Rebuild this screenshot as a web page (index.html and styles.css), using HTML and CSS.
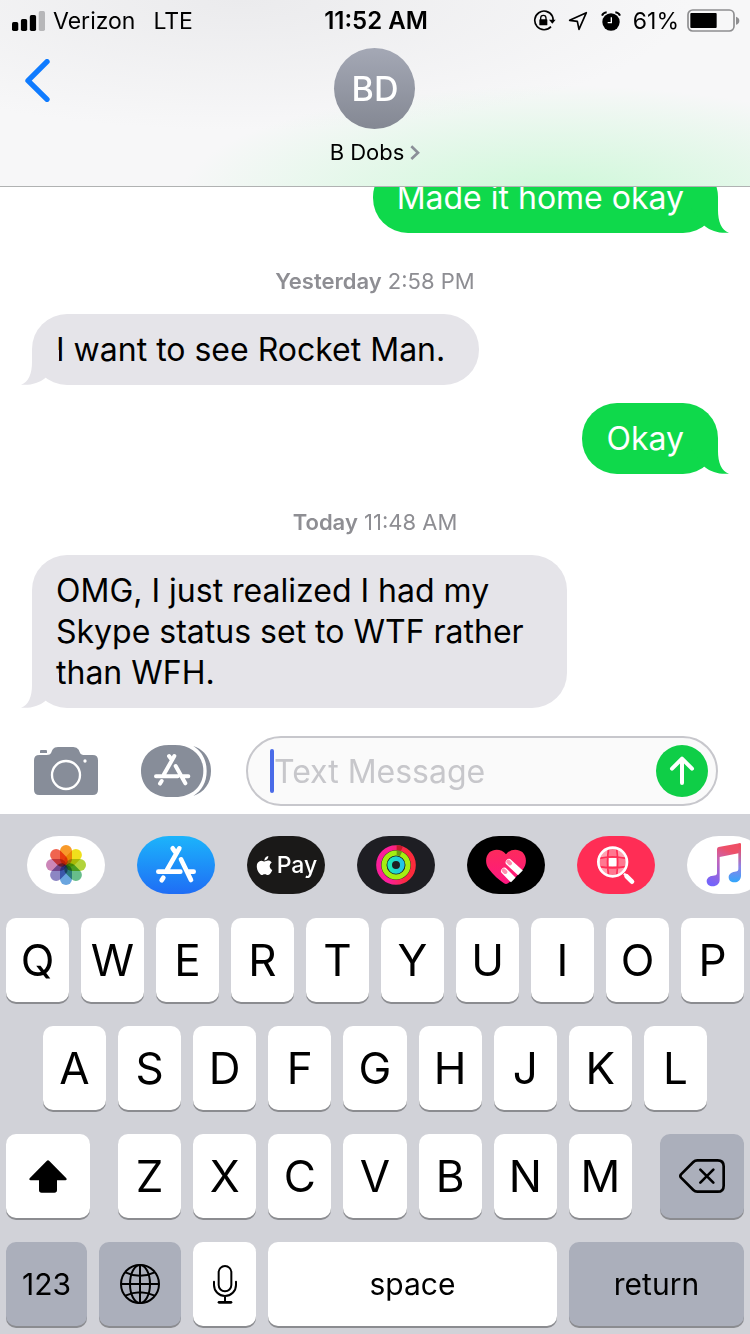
FILE: index.html
```html
<!DOCTYPE html>
<html lang="en">
<head>
<meta charset="utf-8">
<meta name="viewport" content="width=device-width, initial-scale=1">
<title>B Dobs</title>
<link rel="stylesheet" href="styles.css">
</head>
<body>
<svg class="defs" width="0" height="0" aria-hidden="true">
  <symbol id="tail" viewBox="0 0 114 105"><path d="M81 0V30C80 68 90 96 114 104C86 107 60 99 41 84L0 30V0Z"/></symbol>
</svg>

<header class="top">
  <div class="status">
    <div class="status-left">
      <svg class="signal" viewBox="0 0 100 60" aria-hidden="true"><rect y="33" width="19" height="27" rx="5"/><rect x="27" y="24" width="19" height="36" rx="5"/><rect x="54" y="12" width="19" height="48" rx="5"/><rect x="81" width="19" height="60" rx="5" fill="#b7b7b9"/></svg>
      <span>Verizon</span>
      <span class="network">LTE</span>
    </div>
    <time class="clock">11:52 AM</time>
    <div class="status-right">
      <svg class="lock" viewBox="0 0 69 63" aria-hidden="true"><path d="M58 18A28 28 0 1 0 54 50M58 18Q61 25 60 34" fill="none" stroke="#000" stroke-width="5"/><path d="M48 29H68L58 41Z"/><rect x="19" y="28" width="24" height="18" rx="2"/><path d="M23 30V24a8 8 0 0 1 16 0V30" fill="none" stroke="#000" stroke-width="4"/></svg>
      <svg class="locate" viewBox="0 0 60 60" aria-hidden="true"><path d="M55 5L5 28L28 31L33 55Z" fill="none" stroke="#000" stroke-width="5" stroke-linejoin="round"/></svg>
      <svg class="alarm" viewBox="0 0 60 60" aria-hidden="true"><circle cx="30" cy="33" r="26"/><path d="M31 19V35H20" fill="none" stroke="#fff" stroke-width="4"/><path d="M3 14Q7 5 17 4M57 14Q53 5 43 4" fill="none" stroke="#000" stroke-width="6"/></svg>
      <span>61%</span>
      <svg class="battery" viewBox="0 0 159 69" aria-hidden="true"><rect x="3" y="3" width="138" height="63" rx="14" fill="none" stroke="#8e8e90" stroke-width="5"/><rect x="10" y="12" width="79" height="45" rx="3"/><path d="M147 23Q157 26 157 35T147 47Z" fill="#8e8e90"/></svg>
    </div>
  </div>
  <div class="contact-bar">
    <button class="back" aria-label="Back"><svg viewBox="0 0 75 129" aria-hidden="true"><path d="M66 8L9 65L66 121" fill="none" stroke="#0f7bff" stroke-width="16" stroke-linecap="round" stroke-linejoin="round"/></svg></button>
    <button class="contact">
      <span class="avatar">BD</span>
      <span class="name">B Dobs <svg viewBox="0 0 30 45" aria-hidden="true"><path d="M4 4L24 23L4 42" fill="none" stroke="#8b8f98" stroke-width="8"/></svg></span>
    </button>
  </div>
</header>

<main class="thread">
  <p class="bubble sent">Made it home okay<svg class="tail"><use href="#tail"/></svg></p>
  <p class="stamp"><b>Yesterday</b> 2:58 PM</p>
  <p class="bubble received">I want to see Rocket Man.<svg class="tail"><use href="#tail"/></svg></p>
  <p class="bubble sent follow">Okay<svg class="tail"><use href="#tail"/></svg></p>
  <p class="stamp"><b>Today</b> 11:48 AM</p>
  <p class="bubble received">OMG, I just realized I had my Skype status set to WTF rather than WFH.<svg class="tail"><use href="#tail"/></svg></p>
</main>

<form class="compose">
  <button type="button" class="camera" aria-label="Camera"><svg viewBox="0 0 192 144" aria-hidden="true"><g fill="#878d99"><path d="M16 24H38C54 24 51 14 57 6Q61 0 72 0H118Q129 0 134 8C139 18 138 24 154 24H176Q192 24 192 40V128Q192 144 176 144H16Q0 144 0 128V40Q0 24 16 24Z"/><path d="M18 18V12Q18 9 21 9H36Q39 9 39 12V18Z"/></g><circle cx="96" cy="84" r="42" fill="none" stroke="#fff" stroke-width="7"/><circle cx="153" cy="42" r="5" fill="#fff"/></svg></button>
  <button type="button" class="apps" aria-label="Apps"><svg viewBox="0 0 210 156" aria-hidden="true"><path d="M84 0H102C152 0 187 32 187 78S152 156 102 156H84C35 156 0 124 0 78S35 0 84 0Z" fill="#878d99"/><path d="M157 3C190 14 210 42 210 78S190 142 157 153C182 137 197 112 197 78S182 19 157 3Z" fill="#878d99"/><g fill="none" stroke="#fff" stroke-width="12" stroke-linecap="round"><path d="M100 33L69 88M84 33L92 44M104 63L133 115M45 94H110M124 94H142M62 108L57 116"/></g></svg></button>
  <div class="field">
    <span class="caret"></span>
    <input type="text" aria-label="Text Message" placeholder="Text Message">
    <button type="button" class="send" aria-label="Send"><svg viewBox="0 0 78 90" aria-hidden="true"><path d="M39 81V9M9 38L39 8L69 38" fill="none" stroke="#fff" stroke-width="12" stroke-linecap="round" stroke-linejoin="round"/></svg></button>
  </div>
</form>

<section class="keyboard" aria-label="Keyboard">
  <nav class="drawer" aria-label="Message apps">
    <button class="pill" aria-label="Photos"><svg viewBox="0 0 234 174" aria-hidden="true"><g class="petals" transform="translate(117 87)"><rect x="-18" y="-60" width="36" height="60" rx="18" fill="#f89a2a"/><rect x="-18" y="-60" width="36" height="60" rx="18" fill="#f0e01c" transform="rotate(45)"/><rect x="-18" y="-60" width="36" height="60" rx="18" fill="#b2d33c" transform="rotate(90)"/><rect x="-18" y="-60" width="36" height="60" rx="18" fill="#67bd8b" transform="rotate(135)"/><rect x="-18" y="-60" width="36" height="60" rx="18" fill="#6aa5df" transform="rotate(180)"/><rect x="-18" y="-60" width="36" height="60" rx="18" fill="#8d86c3" transform="rotate(225)"/><rect x="-18" y="-60" width="36" height="60" rx="18" fill="#cc86b8" transform="rotate(270)"/><rect x="-18" y="-60" width="36" height="60" rx="18" fill="#f06450" transform="rotate(315)"/></g></svg></button>
    <button class="pill store" aria-label="App Store"><svg viewBox="0 0 234 174" aria-hidden="true"><path d="M127 37L90 102M107 37L116 50M132 70L162 132M64 107H130M154 107H170M79 125L74 133" fill="none" stroke="#fff" stroke-width="14" stroke-linecap="round"/></svg></button>
    <button class="pill pay" aria-label="Apple Pay"><svg viewBox="0 0 24 24" aria-hidden="true"><path fill="#fff" d="M12.152 6.896c-.948 0-2.415-1.078-3.96-1.04-2.04.027-3.91 1.183-4.961 3.014-2.117 3.675-.546 9.103 1.519 12.09 1.013 1.454 2.208 3.09 3.792 3.039 1.52-.065 2.09-.987 3.935-.987 1.831 0 2.35.987 3.96.948 1.637-.026 2.676-1.48 3.676-2.948 1.156-1.688 1.636-3.325 1.662-3.415-.039-.013-3.182-1.221-3.22-4.857-.026-3.04 2.48-4.494 2.597-4.559-1.429-2.09-3.623-2.324-4.39-2.376-2-.156-3.675 1.09-4.61 1.09zM15.53 3.83c.843-1.012 1.4-2.427 1.245-3.83-1.207.052-2.662.805-3.532 1.818-.78.896-1.454 2.338-1.273 3.714 1.338.104 2.715-.688 3.559-1.701"/></svg>Pay</button>
    <button class="pill activity" aria-label="Activity"><svg viewBox="0 0 234 174" aria-hidden="true"><defs><linearGradient id="move"><stop offset=".3" stop-color="#fb1f9a"/><stop offset=".8" stop-color="#fb2b3c"/></linearGradient><linearGradient id="stand"><stop offset="0" stop-color="#1fe8b8"/><stop offset="1" stop-color="#22c3e8"/></linearGradient></defs><g fill="none" stroke-width="15"><circle cx="117" cy="87" r="52" stroke="url(#move)"/><circle cx="117" cy="87" r="36" stroke="#a4ee12"/><circle cx="117" cy="87" r="19" stroke="url(#stand)" stroke-width="14"/><path d="M119 35Q128 35 135 38" stroke="#c31c2a"/><path d="M119 51Q126 51 132 54" stroke="#6d9a10"/></g></svg></button>
    <button class="pill touch" aria-label="Digital Touch"><svg viewBox="0 0 234 174" aria-hidden="true"><defs><linearGradient id="heart" x2="0" y2="1"><stop stop-color="#fc2a5c"/><stop offset="1" stop-color="#ff1781"/></linearGradient></defs><path d="M117 55C130 37 154 38 166 48C180 62 180 83 168 100C156 117 137 132 123 142Q117 146 111 142C97 132 78 117 66 100C54 83 54 62 68 48C80 38 104 37 117 55Z" fill="url(#heart)"/><g fill="none" stroke-linecap="round"><path d="M126 79L164 114M112 105L142 135" stroke="#fff" stroke-width="20"/><path d="M124 77L129 82M110 103L115 108" stroke="#ff8eb0" stroke-width="12"/></g><path d="M174 97L123 148L150 155L185 115Z" fill="#000"/></svg></button>
    <button class="pill images" aria-label="Images"><svg viewBox="0 0 234 174" aria-hidden="true"><circle cx="107" cy="78" r="42" fill="#ffa1b0"/><path d="M90 39H121V63H146V92H121V117H90V92H68V63H90Z" fill="#ff7890"/><path d="M95 66H119V91H95Z" fill="#fff"/><path d="M95 38Q88 78 95 118M119 38Q125 78 119 118M67 67Q106 58 147 67M67 92Q106 99 147 92" fill="none" stroke="#ff2d55" stroke-width="5"/><circle cx="107" cy="78" r="43" fill="none" stroke="#fff" stroke-width="8"/><path d="M141 113L150 122" stroke="#fff" stroke-width="7"/><path d="M149 121L165 137" stroke="#fff" stroke-width="14" stroke-linecap="round"/></svg></button>
    <button class="pill" aria-label="Music"><svg viewBox="0 0 234 174" aria-hidden="true"><defs><linearGradient id="note" x1=".7" y1="0" x2=".3" y2="1"><stop offset=".15" stop-color="#ee4f67"/><stop offset=".45" stop-color="#c565b8"/><stop offset="1" stop-color="#7464fa"/></linearGradient><linearGradient id="note2" x2="0" y2="1"><stop offset=".1" stop-color="#f14b5e"/><stop offset=".6" stop-color="#8d82e8"/><stop offset="1" stop-color="#31a7fc"/></linearGradient></defs><path d="M95 33L157 22Q162 21 162 26V50L98 63V132C98 143 89 151 77 151C67 151 59 145 59 136C59 127 66 120 78 119L86 118Q90 117 90 112V40Q90 34 95 33Z" fill="url(#note)"/><path d="M154 24L157 22Q162 21 162 26V119C162 130 154 139 142 139C132 139 125 133 125 124C125 115 132 109 143 107L150 106Q154 105 154 100Z" fill="url(#note2)"/></svg></button>
  </nav>
  <div class="keys">
    <div class="row"><button>Q</button><button>W</button><button>E</button><button>R</button><button>T</button><button>Y</button><button>U</button><button>I</button><button>O</button><button>P</button></div>
    <div class="row inset"><button>A</button><button>S</button><button>D</button><button>F</button><button>G</button><button>H</button><button>J</button><button>K</button><button>L</button></div>
    <div class="row-shift">
      <button aria-label="Shift"><svg class="shift" viewBox="0 0 114 99" aria-hidden="true"><path d="M53 3Q57 -1 61 3L112 55Q115 60 109 61H84V90Q84 98 76 98H38Q30 98 30 90V61H5Q-1 60 2 55Z"/></svg></button>
      <div class="row"><button>Z</button><button>X</button><button>C</button><button>V</button><button>B</button><button>N</button><button>M</button></div>
      <button class="dark" aria-label="Delete"><svg class="delete" viewBox="0 0 138 102" aria-hidden="true"><g fill="none" stroke="#000" stroke-width="8" stroke-linecap="round" stroke-linejoin="round"><path d="M55 4H116Q134 4 134 22V80Q134 98 116 98H55Q48 98 43 93L6 56Q2 51 6 46L43 9Q48 4 55 4Z"/><path d="M64 32L103 71M103 32L64 71"/></g></svg></button>
    </div>
    <div class="row-space">
      <button class="dark word">123</button>
      <button class="dark" aria-label="Next keyboard"><svg class="globe" viewBox="0 0 120 120" aria-hidden="true"><g fill="none" stroke="#000" stroke-width="6"><circle cx="60" cy="60" r="57"/><ellipse cx="60" cy="60" rx="30" ry="57"/><path d="M60 3V117M3 60H117M16 25Q60 46 104 25M16 95Q60 74 104 95"/></g></svg></button>
      <button aria-label="Dictate"><svg class="mic" viewBox="0 0 72 117" aria-hidden="true"><g fill="none" stroke="#000" stroke-width="6" stroke-linecap="round"><rect x="17" y="3" width="38" height="76" rx="19"/><path d="M3 50V60A33 33 0 0 0 69 60V50M36 93V111"/><path d="M18 112H54" stroke-width="8"/></g></svg></button>
      <button class="word">space</button>
      <button class="dark word">return</button>
    </div>
  </div>
</section>
</body>
</html>
```
FILE: styles.css
```css
* { box-sizing: border-box; }

body {
  margin: 0;
  height: 100vh;
  display: flex;
  flex-direction: column;
  overflow: hidden;
  background: #fff;
  color: #000;
  font-family: Inter, "Liberation Sans", sans-serif;
}

button, input {
  font: inherit;
  color: inherit;
  border: 0;
  padding: 0;
  margin: 0;
  background: none;
}

svg { display: block; flex: none; }
.defs { position: absolute; }

/* Header */
.top {
  flex: none;
  border-bottom: 1px solid #b0b2b2;
  background:
    radial-gradient(ellipse 50% 60% at 74% 106%, #cdf8d8 0%, rgba(213, 248, 222, .8) 35%, rgba(240, 250, 243, 0) 100%),
    radial-gradient(ellipse 60% 70% at 32% 0%, #ebebed 0%, rgba(240, 240, 243, 0) 100%),
    #f7f7f8;
}

.status {
  display: grid;
  grid-template-columns: 1fr auto 1fr;
  align-items: center;
  height: 41px;
  padding: 0 10px 0 12px;
  font-size: 23px;
}
.status-left, .status-right { display: flex; align-items: center; }
.status-right { justify-content: flex-end; }
.clock { font-size: 24px; font-weight: 600; }
.signal { width: 33px; height: 20px; margin-right: 8px; }
.network { margin-left: 18px; }
.lock { width: 23px; height: 21px; margin-right: 12px; }
.locate { width: 20px; height: 20px; margin-right: 13px; }
.alarm { width: 20px; height: 20px; margin-right: 12px; }
.battery { width: 53px; height: 23px; margin-left: 8px; }

.contact-bar {
  display: grid;
  grid-template-columns: 1fr auto 1fr;
  align-items: start;
  padding: 7px 25px 20px;
}
.back { justify-self: start; padding-top: 11px; }
.back svg { width: 25px; height: 43px; }
.contact {
  display: flex;
  flex-direction: column;
  align-items: center;
  gap: 9px;
}
.avatar {
  display: grid;
  place-items: center;
  width: 81px;
  height: 81px;
  border-radius: 50%;
  background: linear-gradient(#a4a8b5, #848893);
  color: #fff;
  font-size: 34px;
  font-weight: 500;
}
.name {
  display: flex;
  align-items: center;
  gap: 6px;
  font-size: 22px;
  line-height: 28px;
}
.name svg { width: 10px; height: 15px; }

/* Conversation */
.thread {
  flex: 1;
  min-height: 0;
  overflow: hidden;
  display: flex;
  flex-direction: column;
  justify-content: flex-end;
  padding: 0 32px 20px;
}
.bubble {
  position: relative;
  flex: none;
  max-width: 78%;
  margin: 0;
  padding: 15px 34px 15px 24px;
  border-radius: 35px;
  font-size: 32px;
  line-height: 41px;
}
.sent { align-self: flex-end; background: #0fd94b; color: #fff; fill: #0fd94b; }
.received { align-self: flex-start; background: #e5e4e9; fill: #e5e4e9; }
.follow { margin-top: 18px; }
.tail {
  position: absolute;
  bottom: 0;
  width: 38px;
  height: 35px;
}
.sent .tail { right: -11px; }
.received .tail { left: -11px; transform: scaleX(-1); }
.stamp {
  flex: none;
  margin: 0;
  padding: 35px 0 20px;
  text-align: center;
  color: #8e8e93;
  font-size: 22px;
  line-height: 26px;
}
.stamp b { font-weight: 600; }

/* Compose bar */
.compose {
  flex: none;
  display: flex;
  align-items: center;
  padding: 8px 32px 8px 34px;
}
.camera { margin-right: 43px; }
.camera svg { width: 64px; height: 48px; }
.apps { margin-right: 35px; }
.apps svg { width: 70px; height: 52px; }
.field {
  flex: 1;
  min-width: 0;
  display: flex;
  align-items: center;
  height: 70px;
  padding: 0 8px 0 22px;
  border: 2px solid #c7c7cc;
  border-radius: 35px;
  background: #fafafa;
}
.caret {
  flex: none;
  width: 4px;
  height: 44px;
  border-radius: 2px;
  background: #4a6be8;
}
.field input {
  flex: 1;
  min-width: 0;
  height: 44px;
  font-size: 32px;
  outline: 0;
}
.field input::placeholder { color: #c7c7cb; opacity: 1; }
.send {
  flex: none;
  display: grid;
  place-items: center;
  width: 52px;
  height: 52px;
  border-radius: 50%;
  background: #0fce47;
}
.send svg { width: 26px; height: 30px; }

/* App drawer */
.keyboard { flex: none; background: #d1d2d8; }
.drawer {
  display: flex;
  gap: 32px;
  padding: 22px 0 24px 27px;
  overflow: hidden;
}
.pill {
  flex: none;
  display: flex;
  align-items: center;
  justify-content: center;
  width: 78px;
  height: 58px;
  border-radius: 32px / 29px;
  overflow: hidden;
  background: #fff;
}
.pill svg { width: 78px; height: 58px; }
.petals rect { mix-blend-mode: multiply; }
.store { background: linear-gradient(#1cb4fb, #1f6df5); }
.pill.pay {
  gap: 3px;
  background: #1a1918;
  color: #fff;
  font-size: 23px;
  font-weight: 500;
}
.pay svg { width: 19px; height: 19px; }
.activity { background: #1e1e23; }
.touch { background: #000; }
.images { background: #ff2d55; }

/* Keys */
.keys {
  display: flex;
  flex-direction: column;
  gap: 24px;
  padding: 0 6px 8px;
}
.row { display: grid; grid-auto-flow: column; grid-auto-columns: minmax(0, 1fr); gap: 12px; }
.inset { padding: 0 5%; }
.row-shift { display: grid; grid-template-columns: 84fr 514fr 84fr; gap: 28px; }
.row-space { display: grid; grid-template-columns: 81fr 82fr 63fr 289fr 175fr; gap: 12px; }
.keys button {
  display: flex;
  align-items: center;
  justify-content: center;
  min-width: 0;
  height: 84px;
  border-radius: 10px;
  background: #fff;
  box-shadow: 0 2px 0 #8b8c90;
  font-size: 44px;
}
.keys .dark { background: #abafbb; }
.keys .word { font-size: 30px; }
.shift { width: 38px; height: 33px; }
.delete { width: 46px; height: 34px; }
.globe { width: 40px; height: 40px; }
.mic { width: 24px; height: 39px; }
```
